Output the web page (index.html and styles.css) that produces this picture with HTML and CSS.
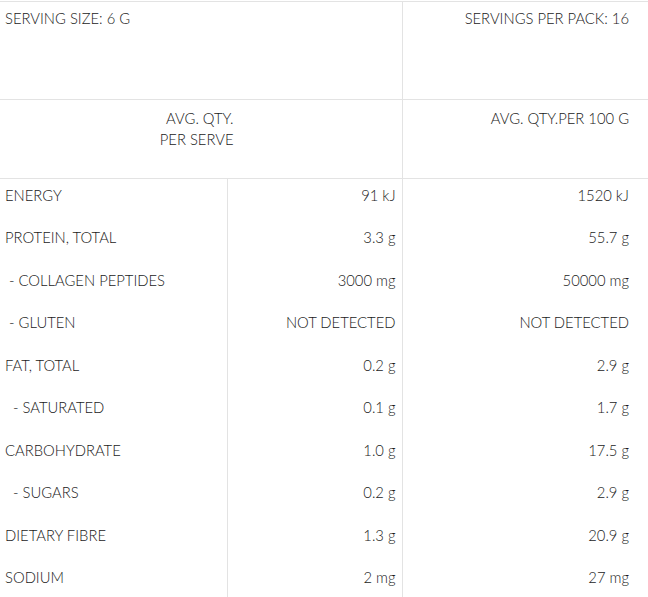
FILE: index.html
```html
<!DOCTYPE html>
<html>
<head>
<meta charset="utf-8">
<link rel="stylesheet" href="styles.css">
</head>
<body>
<table class="nutrition">
  <colgroup>
    <col class="c-label">
    <col class="c-serve">
    <col class="c-100">
  </colgroup>
  <tr class="head-1">
    <td colspan="2" class="left">SERVING SIZE: 6 G</td>
    <td class="right">SERVINGS PER PACK: 16</td>
  </tr>
  <tr class="head-2">
    <td colspan="2" class="serve-head">AVG. QTY.<br>PER SERVE</td>
    <td class="right">AVG. QTY.PER 100 G</td>
  </tr>
  <tr class="row"><td class="label">ENERGY</td><td class="mid">91 kJ</td><td class="right">1520 kJ</td></tr>
  <tr class="row"><td class="label">PROTEIN, TOTAL</td><td class="mid">3.3 g</td><td class="right">55.7 g</td></tr>
  <tr class="row"><td class="label">&nbsp;- COLLAGEN PEPTIDES</td><td class="mid">3000 mg</td><td class="right">50000 mg</td></tr>
  <tr class="row"><td class="label">&nbsp;- GLUTEN</td><td class="mid">NOT DETECTED</td><td class="right">NOT DETECTED</td></tr>
  <tr class="row"><td class="label">FAT, TOTAL</td><td class="mid">0.2 g</td><td class="right">2.9 g</td></tr>
  <tr class="row"><td class="label">&nbsp; - SATURATED</td><td class="mid">0.1 g</td><td class="right">1.7 g</td></tr>
  <tr class="row"><td class="label">CARBOHYDRATE</td><td class="mid">1.0 g</td><td class="right">17.5 g</td></tr>
  <tr class="row"><td class="label">&nbsp; - SUGARS</td><td class="mid">0.2 g</td><td class="right">2.9 g</td></tr>
  <tr class="row"><td class="label">DIETARY FIBRE</td><td class="mid">1.3 g</td><td class="right">20.9 g</td></tr>
  <tr class="row"><td class="label">SODIUM</td><td class="mid">2 mg</td><td class="right">27 mg</td></tr>
</table>
</body>
</html>
```
FILE: styles.css
```css
html, body {
  margin: 0;
  padding: 0;
  background: #fff;
}
body {
  padding-top: 1px;
  font-family: Lato, "Liberation Sans", sans-serif;
  font-size: 14.8px;
  font-weight: 300;
  line-height: 21px;
  color: #1a1a1a;
  overflow: hidden;
}
.nutrition {
  border-collapse: collapse;
  table-layout: fixed;
  width: 648px;
  border-top: 1px solid #e3e3e3;
}
.c-label { width: 227px; }
.c-serve { width: 175px; }
.c-100 { width: 246px; }
.nutrition td {
  padding: 0;
  vertical-align: top;
}
.head-1 td {
  height: 98px;
  box-sizing: border-box;
  padding-top: 6px;
  border-bottom: 1px solid #e3e3e3;
}
.head-2 td {
  height: 79px;
  box-sizing: border-box;
  padding-top: 8px;
  border-bottom: 1px solid #e3e3e3;
}
.left { padding-left: 5px !important; }
.right {
  text-align: right;
  padding-right: 19px !important;
  border-left: 1px solid #e3e3e3;
}
.serve-head {
  text-align: right;
  padding-right: 168px !important;
}
.row td {
  height: 42.5px;
  box-sizing: border-box;
  padding-top: 6px;
}
.label {
  padding-left: 5px !important;
  white-space: pre;
}
.mid {
  text-align: right;
  padding-right: 6px !important;
  border-left: 1px solid #e3e3e3;
}
```
